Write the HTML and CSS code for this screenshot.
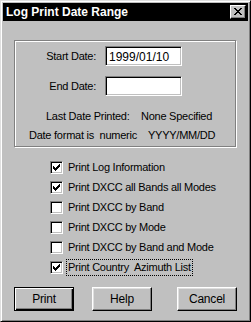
FILE: index.html
```html
<!DOCTYPE html>
<html>
	<head>
		<meta charset="UTF-8" />
		<title>Log Print Date Range</title>
		<link rel="stylesheet" href="styles.css">
	</head>
	<body>
		<div class="window">
			<div class="titlebar">
				<span class="title">Log Print Date Range</span>
				<span class="close">
					<svg width="8" height="7" viewBox="0 0 8 7">
						<path d="M0 0h2v1h1v1h2V1h1V0h2v1H7v1H6v1H5v1h1v1h1v1h1v1H6V6H5V5H3v1H2v1H0V6h1V5h1V4h1V3H2V2H1V1H0z" fill="#000" />
					</svg>
				</span>
			</div>
			<div class="content">
				<div class="group">
					<div class="field">
						<label class="field-label">Start Date:</label>
						<div class="edit">1999/01/10</div>
					</div>
					<div class="field">
						<label class="field-label">End Date:</label>
						<div class="edit"></div>
					</div>
					<div class="info info-last">
						<span class="info-label">Last Date Printed:</span>
						<span>None Specified</span>
					</div>
					<div class="info info-format">
						<span class="info-label">Date format is&nbsp; numeric</span>
						<span>YYYY/MM/DD</span>
					</div>
				</div>
				<ul class="checks">
					<li><span class="box checked"></span><span class="text">Print Log Information</span></li>
					<li><span class="box checked"></span><span class="text">Print DXCC all Bands all Modes</span></li>
					<li><span class="box"></span><span class="text">Print DXCC by Band</span></li>
					<li><span class="box"></span><span class="text">Print DXCC by Mode</span></li>
					<li><span class="box"></span><span class="text">Print DXCC by Band and Mode</span></li>
					<li><span class="box checked"></span><span class="text focus">Print Country&nbsp; Azimuth List</span></li>
				</ul>
				<div class="buttons">
					<button class="btn default">Print</button>
					<button class="btn help">Help</button>
					<button class="btn">Cancel</button>
				</div>
			</div>
		</div>
	</body>
</html>
```

FILE: styles.css
```css
* {
	margin: 0;
	padding: 0;
	box-sizing: border-box;
	list-style: none;
}

body {
	font-family: "Liberation Sans", Arial, sans-serif;
	font-size: 11px;
	letter-spacing: -0.25px;
	color: #000;
	background: #c0c0c0;
}

.window {
	width: 251px;
	height: 322px;
	background: #c0c0c0;
	border: 1px solid;
	border-color: #dfdfdf #000 #000 #dfdfdf;
	box-shadow: inset 1px 1px 0 #fff, inset -1px -1px 0 #808080;
	padding: 2px;
	display: flex;
	flex-direction: column;
}

.titlebar {
	height: 18px;
	background: #000;
	color: #fff;
	display: flex;
	align-items: center;
	justify-content: space-between;
	padding: 0 2px 0 3px;
}

.title {
	font-weight: bold;
	font-size: 12px;
	letter-spacing: 0;
}

.close {
	width: 16px;
	height: 14px;
	background: #c0c0c0;
	border: 1px solid;
	border-color: #fff #000 #000 #fff;
	box-shadow: inset -1px -1px 0 #808080;
	display: flex;
	align-items: center;
	justify-content: center;
	padding: 0 1px 1px 0;
}

.close svg {
	display: block;
}

.content {
	padding: 19px 11px 0 11px;
}

/* etched group frame */
.group {
	height: 107px;
	border: 1px solid #808080;
	box-shadow: 1px 1px 0 #fff, inset 1px 1px 0 #fff;
	margin-right: 1px;
	padding-top: 5px;
}

.field {
	display: flex;
	align-items: center;
	height: 20px;
	margin-bottom: 10px;
}

.field-label {
	width: 81px;
	text-align: right;
	margin-right: 9px;
}

.edit {
	width: 77px;
	height: 20px;
	background: #fff;
	border: 1px solid;
	border-color: #808080 #fff #fff #808080;
	box-shadow: inset 1px 1px 0 #000, inset -1px -1px 0 #c0c0c0;
	padding: 3px 0 0 3px;
	font-size: 12px;
	letter-spacing: 0;
}

.info {
	display: flex;
	line-height: 14px;
	height: 19px;
	padding-top: 3px;
	white-space: nowrap;
}

.info-last {
	padding-left: 31px;
}

.info-last .info-label {
	width: 95px;
}

.info-format {
	padding-left: 14px;
}

.info-format .info-label {
	width: 119px;
}

.checks {
	margin-top: 10px;
	padding-left: 36px;
}

.checks li {
	display: flex;
	align-items: center;
	height: 20px;
	white-space: nowrap;
}

.box {
	width: 13px;
	height: 13px;
	background: #fff;
	border: 1px solid;
	border-color: #808080 #fff #fff #808080;
	box-shadow: inset 1px 1px 0 #000, inset -1px -1px 0 #c0c0c0;
	margin-right: 4px;
}

/* 7x7 pixel tick */
.box.checked {
	background:
		linear-gradient(#000, #000) 9px 3px / 1px 1px no-repeat,
		linear-gradient(#000, #000) 8px 4px / 2px 1px no-repeat,
		linear-gradient(#000, #000) 3px 5px / 1px 1px no-repeat,
		linear-gradient(#000, #000) 7px 5px / 3px 1px no-repeat,
		linear-gradient(#000, #000) 3px 6px / 2px 1px no-repeat,
		linear-gradient(#000, #000) 6px 6px / 3px 1px no-repeat,
		linear-gradient(#000, #000) 3px 7px / 5px 1px no-repeat,
		linear-gradient(#000, #000) 4px 8px / 3px 1px no-repeat,
		linear-gradient(#000, #000) 5px 9px / 1px 1px no-repeat,
		#fff;
	background-origin: border-box;
}

.text {
	line-height: 15px;
	padding: 0 1px;
}

.text.focus {
	outline: 1px dotted #000;
	outline-offset: 0;
}

.buttons {
	display: flex;
	margin-top: 10px;
}

.btn {
	width: 60px;
	height: 24px;
	font-family: "Liberation Sans", Arial, sans-serif;
	font-size: 12px;
	letter-spacing: -0.2px;
	background: #c0c0c0;
	border: 1px solid;
	border-color: #fff #000 #000 #fff;
	box-shadow: inset -1px -1px 0 #808080, inset 1px 1px 0 #dfdfdf;
	color: #000;
}

.btn.default {
	border: 1px solid #000;
	box-shadow: inset 1px 1px 0 #fff, inset -1px -1px 0 #000, inset -2px -2px 0 #808080;
}

.btn.help {
	margin: 0 25px 0 18px;
}
```
